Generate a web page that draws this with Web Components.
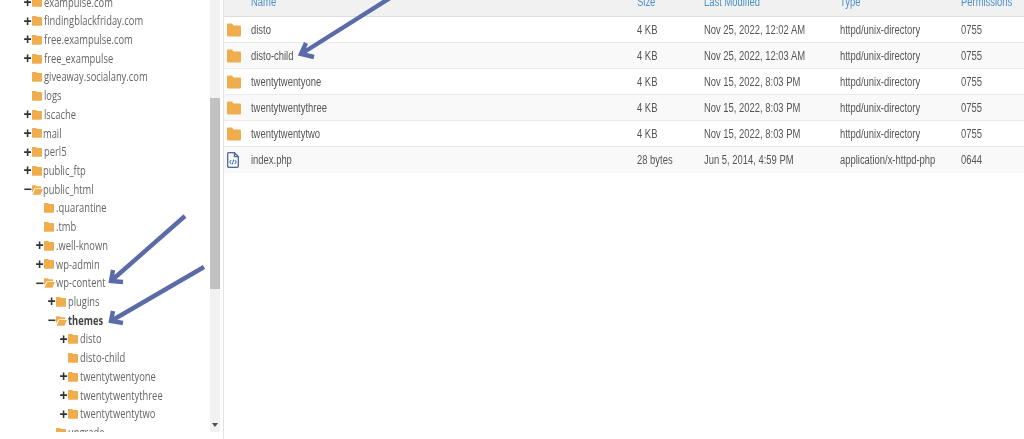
<!DOCTYPE html>
<html>
<head>
<meta charset="utf-8">
<title>File Manager</title>
<style>
html,body{margin:0;height:100%;overflow:hidden;background:#fff}
</style>
</head>
<body>
<fm-app>
  <fm-tree slot="tree">
    <fm-node depth="0" state="closed">exampulse.com</fm-node>
    <fm-node depth="0" state="closed">findingblackfriday.com</fm-node>
    <fm-node depth="0" state="closed">free.exampulse.com</fm-node>
    <fm-node depth="0" state="closed">free_exampulse</fm-node>
    <fm-node depth="0">giveaway.socialany.com</fm-node>
    <fm-node depth="0">logs</fm-node>
    <fm-node depth="0" state="closed">lscache</fm-node>
    <fm-node depth="0" state="closed" tight>mail</fm-node>
    <fm-node depth="0" state="closed">perl5</fm-node>
    <fm-node depth="0" state="closed" tight>public_ftp</fm-node>
    <fm-node depth="0" state="open" tight>public_html</fm-node>
    <fm-node depth="1">.quarantine</fm-node>
    <fm-node depth="1">.tmb</fm-node>
    <fm-node depth="1" state="closed">.well-known</fm-node>
    <fm-node depth="1" state="closed">wp-admin</fm-node>
    <fm-node depth="1" state="open">wp-content</fm-node>
    <fm-node depth="2" state="closed">plugins</fm-node>
    <fm-node depth="2" state="open" current>themes</fm-node>
    <fm-node depth="3" state="closed">disto</fm-node>
    <fm-node depth="3">disto-child</fm-node>
    <fm-node depth="3" state="closed">twentytwentyone</fm-node>
    <fm-node depth="3" state="closed">twentytwentythree</fm-node>
    <fm-node depth="3" state="closed">twentytwentytwo</fm-node>
    <fm-node depth="2">upgrade</fm-node>
  </fm-tree>
  <fm-table slot="files">
    <fm-row head name="Name" size="Size" modified="Last Modified" type="Type" perms="Permissions"></fm-row>
    <fm-row kind="dir" name="disto" size="4 KB" modified="Nov 25, 2022, 12:02 AM" type="httpd/unix-directory" perms="0755"></fm-row>
    <fm-row kind="dir" name="disto-child" size="4 KB" modified="Nov 25, 2022, 12:03 AM" type="httpd/unix-directory" perms="0755" odd></fm-row>
    <fm-row kind="dir" name="twentytwentyone" size="4 KB" modified="Nov 15, 2022, 8:03 PM" type="httpd/unix-directory" perms="0755"></fm-row>
    <fm-row kind="dir" name="twentytwentythree" size="4 KB" modified="Nov 15, 2022, 8:03 PM" type="httpd/unix-directory" perms="0755" odd></fm-row>
    <fm-row kind="dir" name="twentytwentytwo" size="4 KB" modified="Nov 15, 2022, 8:03 PM" type="httpd/unix-directory" perms="0755"></fm-row>
    <fm-row kind="php" name="index.php" size="28 bytes" modified="Jun 5, 2014, 4:59 PM" type="application/x-httpd-php" perms="0644" odd last></fm-row>
  </fm-table>
  <fm-arrows slot="overlay"></fm-arrows>
</fm-app>
<script>
const FOLDER='<svg viewBox="0 0 10 10" width="10" height="10"><path fill="#f0ad4e" d="M0 .8Q0 .1 .7 .1H4.2L5 1H9.3Q10 1 10 1.7V9Q10 9.7 9.3 9.7H.7Q0 9.7 0 9Z"/></svg>';
const FOLDER_OPEN='<svg viewBox="0 0 11 10" width="11" height="10"><path fill="#f0ad4e" d="M0 .8Q0 .2 .6 .2H3.6L4.6 1.2H8.6Q9.2 1.2 9.2 1.8V3.2H2.8L0 7.4ZM3.2 4H11L8.4 9.7H.5Z"/></svg>';
const FOLDER_BIG='<svg viewBox="0 0 14 14" width="14" height="14"><path fill="#f0ad4e" d="M0 1.6Q0 .6 1 .6H5L6.4 2.4H13Q14 2.4 14 3.4V12.4Q14 13.4 13 13.4H1Q0 13.4 0 12.4Z"/></svg>';
const PHP='<svg viewBox="0 0 12 16" width="12" height="16"><path fill="none" stroke="#4a6a9c" stroke-width="1.3" d="M1.6 .7H7.4L11.3 4.6V14Q11.3 15.3 10 15.3H2Q.7 15.3 .7 14V1.6Q.7 .7 1.6 .7ZM7.4 .7V4.6H11.3"/><path fill="none" stroke="#4a6a9c" stroke-width="1" d="M4.2 8 2.7 10 4.2 12M7.8 8 9.3 10 7.8 12M6.7 7.6 5.3 12.4"/></svg>';

class FmApp extends HTMLElement{
    constructor(){
        super();
        this.attachShadow({mode:'open'});
        this.shadowRoot.innerHTML=`<style>
        :host{display:flex;position:relative;width:1024px;height:439px;overflow:hidden;background:#fff;filter:blur(.35px)}
        .side{flex:0 0 223px;display:flex}
        .main{flex:1;border-left:1px solid #e3e3e3}
        ::slotted(fm-arrows){position:absolute;left:0;top:0}
        </style>
        <div class="side"><slot name="tree"></slot></div>
        <div class="main"><slot name="files"></slot></div>
        <slot name="overlay"></slot>`;
    }
}
class FmTree extends HTMLElement{
    constructor(){
        super();
        this.attachShadow({mode:'open'});
        this.shadowRoot.innerHTML=`<style>
        :host{display:flex;width:100%;height:432px;overflow:hidden;font:12px "Open Sans",sans-serif;color:#666}
        .list{flex:0 0 210px;height:432px;overflow:hidden;display:block}
        .inner{margin-top:-6.5px}
        .bar{flex:0 0 10px;background:#f1f1f1;display:flex;flex-direction:column}
        .gap{flex:0 0 98px}
        .thumb{flex:0 0 191px;background:#c1c1c1}
        .down{margin:auto auto 5px;width:0;height:0;border:3.5px solid transparent;border-top:4px solid #505050;border-bottom:0}
        </style>
        <div class="list"><div class="inner"><slot></slot></div></div>
        <div class="bar"><div class="gap"></div><div class="thumb"></div><div class="down"></div></div>`;
    }
}
class FmNode extends HTMLElement{
    constructor(){
        super();
        this.attachShadow({mode:'open'});
        const depth=+this.getAttribute('depth');
        const state=this.getAttribute('state');
        const tight=this.hasAttribute('tight');
        const tog=state=='closed'?'+':state=='open'?'\u2212':'';
        const icon=state=='open'?FOLDER_OPEN:FOLDER;
        let gap=2;
        if(tight) gap=1;
        if(state=='open') gap=tight?0:1;
        this.shadowRoot.innerHTML=`<style>
        :host{display:block;height:18.72px;line-height:18.72px;white-space:nowrap}
        .row{display:flex;align-items:center;height:100%;padding-left:${23+depth*12}px}
        .tog{flex:0 0 9px;text-align:center;font:bold 14px/12px "Liberation Sans",sans-serif;color:#333;padding-bottom:2px}
        .ico{display:flex;margin-right:${gap}px;padding-bottom:1px}
        .txt{display:inline-block;transform:scaleX(.78);transform-origin:0 50%}
        :host([current]) .txt{font-weight:700;color:#444}
        </style>
        <div class="row"><span class="tog">${tog}</span><span class="ico">${icon}</span><span class="txt"><slot></slot></span></div>`;
    }
}
class FmTable extends HTMLElement{
    constructor(){
        super();
        this.attachShadow({mode:'open'});
        this.shadowRoot.innerHTML=`<style>
        :host{display:block;font:12px "Liberation Sans",sans-serif;color:#555}
        </style><slot></slot>`;
    }
}
class FmRow extends HTMLElement{
    constructor(){
        super();
        this.attachShadow({mode:'open'});
        const a=n=>this.getAttribute(n);
        const kind=a('kind');
        const icon=kind=='dir'?FOLDER_BIG:kind=='php'?PHP:'';
        const cells=['name','size','modified','type','perms'].map(n=>`<div><span>${a(n)}</span></div>`).join('');
        this.shadowRoot.innerHTML=`<style>
        :host{display:grid;grid-template-columns:27px 386px 67px 136px 121px 1fr;align-items:center;height:25px;border-bottom:1px solid #ebebeb;background:#fff;overflow:hidden}
        :host([odd]){background:#f9f9f9}
        :host([last]){border-bottom-color:#f9f9f9}
        :host([head]){height:16px;background:#f1f1f1;border-bottom:1px solid #ddd;color:#4a8fcb;align-items:start}
        :host([head]) div{margin-top:-5px}
        .ico{display:flex;padding-left:3px}
        div{white-space:nowrap}
        span{display:inline-block;transform:scaleX(.785);transform-origin:0 50%}
        </style>
        <div class="ico">${icon}</div>${cells}`;
    }
}
class FmArrows extends HTMLElement{
    constructor(){
        super();
        this.attachShadow({mode:'open'});
        const arrow=(x1,y1,x2,y2,hx1,hy1,hx2,hy2)=>`<path d="M${x1} ${y1}L${x2} ${y2}M${hx1} ${hy1}L${x2} ${y2}L${hx2} ${hy2}"/>`;
        this.shadowRoot.innerHTML=`<style>
        :host{display:block;width:1024px;height:439px;pointer-events:none}
        path{fill:none;stroke:#5b6ba8;stroke-width:4.4;stroke-linejoin:miter}
        </style>
        <svg width="1024" height="439">
        ${arrow(390,-2,301,54,306,43,314,57)}
        ${arrow(185,216,111,281,113,270,123,282)}
        ${arrow(204,267,111,321,113,311,123,323)}
        </svg>`;
    }
}
customElements.define('fm-app',FmApp);
customElements.define('fm-tree',FmTree);
customElements.define('fm-node',FmNode);
customElements.define('fm-table',FmTable);
customElements.define('fm-row',FmRow);
customElements.define('fm-arrows',FmArrows);
</script>
</body>
</html>
